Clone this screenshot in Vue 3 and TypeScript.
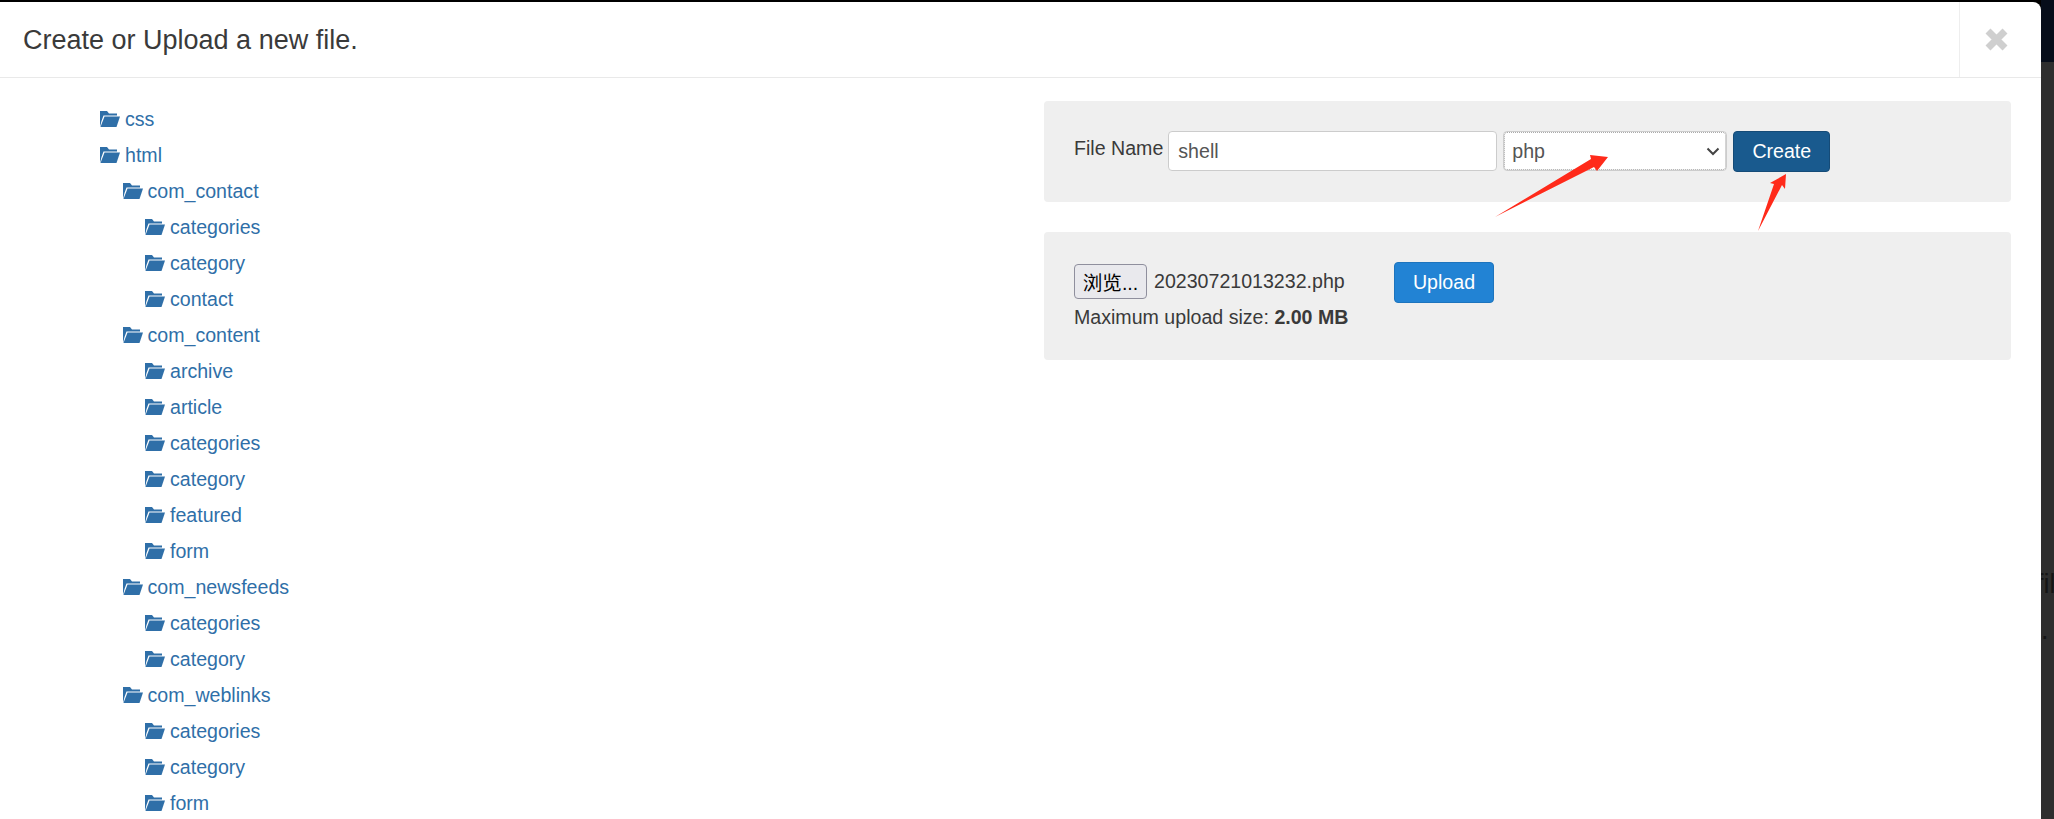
<script setup lang="ts">
import { ref } from 'vue'

interface Folder {
  name: string
  depth: number
}

const fileName = ref('shell')
const fileType = ref('php')

// flat list, depth only drives the indent
const folders: Folder[] = [
  { name: 'css', depth: 0 },
  { name: 'html', depth: 0 },
  { name: 'com_contact', depth: 1 },
  { name: 'categories', depth: 2 },
  { name: 'category', depth: 2 },
  { name: 'contact', depth: 2 },
  { name: 'com_content', depth: 1 },
  { name: 'archive', depth: 2 },
  { name: 'article', depth: 2 },
  { name: 'categories', depth: 2 },
  { name: 'category', depth: 2 },
  { name: 'featured', depth: 2 },
  { name: 'form', depth: 2 },
  { name: 'com_newsfeeds', depth: 1 },
  { name: 'categories', depth: 2 },
  { name: 'category', depth: 2 },
  { name: 'com_weblinks', depth: 1 },
  { name: 'categories', depth: 2 },
  { name: 'category', depth: 2 },
  { name: 'form', depth: 2 },
]
</script>

<template>
  <div class="page">
    <div class="modal">
      <div class="modal-header">
        <h4 class="modal-title">Create or Upload a new file.</h4>
        <button class="close" aria-label="Close">
          <svg width="23" height="23" viewBox="0 0 23 23">
            <path d="M3 3L20 20M20 3L3 20" stroke="#cfcfcf" stroke-width="7" fill="none" />
          </svg>
        </button>
      </div>
      <div class="modal-body">
        <ul class="tree">
          <li
            v-for="(folder, i) in folders"
            :key="i"
            class="tree-row"
            :style="{ paddingLeft: folder.depth * 22.5 + 'px' }"
          >
            <svg class="folder-icon" width="20" height="16" viewBox="0 0 20 16">
              <path d="M0 0H7L9 2.5H17V4.5H3.5L1.5 10L0 16Z" />
              <path d="M4.5 5.5H20L16.5 16H0.5Z" />
            </svg>
            <a href="#" class="tree-link">{{ folder.name }}</a>
          </li>
        </ul>
        <div class="side">
          <div class="well well-create">
            <label class="name-label">File Name</label>
            <input v-model="fileName" class="form-control name-input" type="text" />
            <div class="select-wrap">
              <select v-model="fileType" class="form-control type-select">
                <option>php</option>
                <option>html</option>
                <option>css</option>
              </select>
              <span class="select-focus"></span>
              <svg class="chevron" width="14" height="9" viewBox="0 0 14 9">
                <path d="M1.5 1.5L7 7L12.5 1.5" stroke="#444" stroke-width="2" fill="none" />
              </svg>
            </div>
            <button class="btn btn-create">Create</button>
            <svg class="arrow arrow-one" width="120" height="70" viewBox="0 0 120 70">
              <path d="M0 62L96 4L95 0L113 2L102 16L99 12Z" fill="#ff2a1a" />
            </svg>
            <svg class="arrow arrow-two" width="40" height="60" viewBox="0 0 40 60">
              <path d="M1 58L17 11L13 10L29 1L28 16L25 12Z" fill="#ff2a1a" />
            </svg>
          </div>
          <div class="well well-upload">
            <div class="upload-row">
              <div class="file-line">
                <button class="file-btn">浏览...</button>
                <span class="file-name">20230721013232.php</span>
              </div>
              <button class="btn btn-upload">Upload</button>
            </div>
            <p class="max-size">Maximum upload size: <strong>2.00 MB</strong></p>
          </div>
        </div>
      </div>
    </div>
    <div class="backdrop">
      <div class="backdrop-top"></div>
      <div class="backdrop-text">
        <span class="ghost-word">file</span>
        <span class="ghost-dot">.</span>
      </div>
    </div>
  </div>
</template>

<style scoped>
.page {
  display: flex;
  height: 819px;
  overflow: hidden;
  background: #000;
  font-family: "Liberation Sans", Arial, sans-serif;
  font-size: 19.6px;
  color: #3a3a3a;
}

.modal {
  width: 2041px;
  flex-shrink: 0;
  margin-top: 2px;
  background: #fff;
  border-top-right-radius: 8px;
  overflow: hidden;
}

.modal-header {
  display: flex;
  justify-content: space-between;
  height: 75px;
  border-bottom: 1px solid #e9e9e9;
}

.modal-title {
  margin: 0;
  padding-left: 23px;
  font-size: 27px;
  font-weight: 400;
  line-height: 76px;
}

.close {
  width: 82px;
  padding: 0 8px 0 0;
  border: 0;
  border-left: 1px solid #eee;
  background: transparent;
  display: flex;
  align-items: center;
  justify-content: center;
}

.modal-body {
  display: flex;
  justify-content: space-between;
  padding-right: 30px;
}

.tree {
  list-style: none;
  margin: 0;
  padding: 23px 0 0 100px;
}

.tree-row {
  display: flex;
  align-items: center;
  height: 36px;
}

.folder-icon {
  fill: #2f6fa8;
  margin-right: 5px;
  flex-shrink: 0;
}

.tree-link {
  color: #2f6fa8;
  text-decoration: none;
}

.side {
  width: 967px;
  padding-top: 23px;
}

.well {
  background: #efefef;
  border-radius: 4px;
  padding: 30px;
}

.well-create {
  position: relative;
  display: flex;
  align-items: flex-start;
  height: 101px;
  box-sizing: border-box;
  margin-bottom: 30px;
}

.name-label {
  line-height: 34px;
  margin-right: 5px;
}

.form-control {
  height: 40px;
  box-sizing: border-box;
  border: 1px solid #ccc;
  border-radius: 4px;
  background: #fff;
  color: #555;
  font: inherit;
  padding: 0 9px;
}

.name-input {
  width: 329px;
}

.select-wrap {
  position: relative;
  margin-left: 6px;
}

.type-select {
  width: 224px;
  display: block;
  appearance: none;
  padding: 0 8px;
  outline: none;
}

.select-focus {
  position: absolute;
  inset: 1px;
  border: 1px dotted #aaa;
  border-radius: 3px;
  pointer-events: none;
}

.chevron {
  position: absolute;
  right: 7px;
  top: 16px;
  pointer-events: none;
}

.btn {
  color: #fff;
  font: inherit;
  border-radius: 4px;
  padding: 0;
  height: 41px;
}

.btn-create {
  width: 97px;
  margin-left: 6px;
  background: #195a8e;
  border: 1px solid #154b77;
}

.arrow {
  position: absolute;
}

.arrow-one {
  left: 451px;
  top: 54px;
}

.arrow-two {
  left: 713px;
  top: 72px;
}

.well-upload {
  height: 128px;
  box-sizing: border-box;
}

.upload-row {
  display: flex;
  align-items: flex-start;
}

.file-line {
  width: 320px;
  display: flex;
  align-items: center;
  height: 35px;
  margin-top: 2px;
}

.file-btn {
  width: 73px;
  height: 35px;
  padding: 0;
  background: #e9e9ed;
  border: 1px solid #8f8f9d;
  border-radius: 4px;
  color: #000;
  font-family: "Liberation Sans", "Noto Sans CJK SC", sans-serif;
  font-size: 19.6px;
}

.file-name {
  margin-left: 7px;
}

.btn-upload {
  width: 100px;
  background: #2283d4;
  border: 1px solid #1d74bd;
}

.max-size {
  margin: 0;
  line-height: 28px;
}

.backdrop {
  flex: 1;
  display: flex;
  flex-direction: column;
  background: #2e2e2e;
  overflow: hidden;
}

.backdrop-top {
  height: 62px;
  flex-shrink: 0;
  background: #060d1a;
}

.backdrop-text {
  color: #151515;
  font-size: 27px;
  line-height: 34px;
  margin-top: 505px;
  margin-left: -5px;
  white-space: nowrap;
}

.ghost-word,
.ghost-dot {
  display: block;
}

.ghost-dot {
  margin-top: 12px;
  margin-left: 5px;
}
</style>

<style>
html,
body {
  margin: 0;
  background: #000;
}
</style>
